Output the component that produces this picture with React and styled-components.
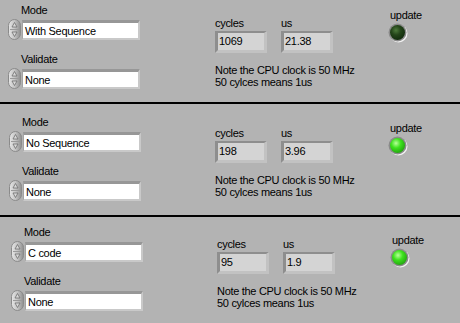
import React from "react";
import styled, { createGlobalStyle } from "styled-components";

const GlobalStyle = createGlobalStyle`
	html, body {
		margin: 0;
		padding: 0;
		background: #b3b3b3;
	}
	body {
		font-family: "Liberation Sans", Arial, sans-serif;
		font-size: 11px;
		letter-spacing: -0.3px;
		color: #000;
	}
`;

const panels = [
	{
		height: 104,
		left: { x: 8, y: 4 },
		mid: { x: 215, y: 17 },
		led: { x: 388, y: 9 },
		mode: "With Sequence",
		cycles: "1069",
		us: "21.38",
		on: false,
	},
	{
		height: 113,
		left: { x: 9, y: 12 },
		mid: { x: 215, y: 23 },
		led: { x: 388, y: 18 },
		mode: "No Sequence",
		cycles: "198",
		us: "3.96",
		on: true,
	},
	{
		height: 102,
		left: { x: 11, y: 9 },
		mid: { x: 217, y: 21 },
		led: { x: 390, y: 17 },
		mode: "C code",
		cycles: "95",
		us: "1.9",
		on: true,
	},
];

const Spinner = () => (
	<SpinBox>
		<svg width="13" height="21" viewBox="0 0 13 21">
			<defs>
				<linearGradient id="spin" x1="0" x2="1" y1="0" y2="0">
					<stop offset="0" stopColor="#e6e6e6" />
					<stop offset="0.5" stopColor="#c4c4c4" />
					<stop offset="1" stopColor="#8e8e8e" />
				</linearGradient>
			</defs>
			<rect x="0.5" y="0.5" width="12" height="20" rx="6" fill="url(#spin)" stroke="#8a8a8a" />
			<line x1="2" y1="10.5" x2="11" y2="10.5" stroke="#9a9a9a" />
			<path d="M4 8 L6.5 3.5 L9 8 Z" fill="#d8d8d8" stroke="#6e6e6e" strokeWidth="0.8" />
			<path d="M4 13 L6.5 17.5 L9 13 Z" fill="#d8d8d8" stroke="#6e6e6e" strokeWidth="0.8" />
		</svg>
	</SpinBox>
);

const Led = ({ on }) => (
	<svg width="20" height="20" viewBox="0 0 20 20">
		<defs>
			<radialGradient id={on ? "ledOn" : "ledOff"} cx="0.4" cy="0.35" r="0.7">
				<stop offset="0" stopColor={on ? "#b8ff9a" : "#4d7a3c"} />
				<stop offset="0.45" stopColor={on ? "#3ee21e" : "#24451a"} />
				<stop offset="1" stopColor={on ? "#22a010" : "#102a0c"} />
			</radialGradient>
		</defs>
		<circle cx="10.5" cy="10.5" r="9" fill="#f2f2f2" />
		<circle cx="9.5" cy="9.5" r="9" fill="#8a8a8a" />
		<circle cx="9.5" cy="9.5" r="7.5" fill={`url(#${on ? "ledOn" : "ledOff"})`} />
	</svg>
);

const Control = ({ label, value }) => (
	<Field>
		<FieldLabel>{label}</FieldLabel>
		<FieldRow>
			<Spinner />
			<TextBox>{value}</TextBox>
		</FieldRow>
	</Field>
);

const Indicator = ({ label, value }) => (
	<Numeric>
		<FieldLabel $indent={0}>{label}</FieldLabel>
		<NumBox>{value}</NumBox>
	</Numeric>
);

const App = () => (
	<>
		<GlobalStyle />
		<Page>
			{panels.map((p, i) => (
				<Panel key={i} $h={p.height} $last={i === panels.length - 1}>
					<LeftCol $x={p.left.x} $y={p.left.y}>
						<Control label="Mode" value={p.mode} />
						<Control label="Validate" value="None" />
					</LeftCol>
					<MidCol $x={p.mid.x - p.left.x - 133} $y={p.mid.y}>
						<NumRow>
							<Indicator label="cycles" value={p.cycles} />
							<Indicator label="us" value={p.us} />
						</NumRow>
						<Note>
							Note the CPU clock is 50 MHz
							<br />
							50 cylces means 1us
						</Note>
					</MidCol>
					<LedCol $x={p.led.x - p.mid.x - 160} $y={p.led.y}>
						<LedLabel>update</LedLabel>
						<Led on={p.on} />
					</LedCol>
				</Panel>
			))}
		</Page>
	</>
);

export default App;

const Page = styled.main`
	width: 460px;
	height: 323px;
	overflow: hidden;
	background: #b3b3b3;
`;

const Panel = styled.section`
	display: flex;
	align-items: flex-start;
	height: ${p => p.$h}px;
	box-sizing: border-box;
	border-bottom: ${p => (p.$last ? "none" : "2px solid #000")};
`;

const LeftCol = styled.div`
	display: flex;
	flex-direction: column;
	gap: 13px;
	width: 133px;
	margin-left: ${p => p.$x}px;
	margin-top: ${p => p.$y}px;
`;

const Field = styled.div`
	display: flex;
	flex-direction: column;
	gap: 2px;
`;

const FieldLabel = styled.div`
	line-height: 13px;
	padding-left: ${p => (p.$indent ?? 13)}px;
`;

const FieldRow = styled.div`
	display: flex;
	align-items: center;
	gap: 1px;
`;

const SpinBox = styled.div`
	display: flex;
	width: 13px;
	height: 21px;
`;

const TextBox = styled.div`
	box-sizing: border-box;
	width: 118px;
	height: 20px;
	padding: 1px 3px 0 2px;
	line-height: 15px;
	background: #fff;
	border-style: solid;
	border-width: 3px 2px 2px 1px;
	border-color: #979797 #c9c9c9 #c9c9c9 #a3a3a3;
	white-space: nowrap;
`;

const MidCol = styled.div`
	display: flex;
	flex-direction: column;
	gap: 11px;
	width: 160px;
	margin-left: ${p => p.$x}px;
	margin-top: ${p => p.$y}px;
`;

const NumRow = styled.div`
	display: flex;
	gap: 14px;
`;

const Numeric = styled.div`
	display: flex;
	flex-direction: column;
	gap: 1px;
`;

const NumBox = styled.div`
	box-sizing: border-box;
	width: 52px;
	height: 22px;
	padding-left: 1px;
	line-height: 16px;
	background: #d4d4d4;
	border-style: solid;
	border-width: 2px 3px 3px 3px;
	border-color: #8e8e8e #c2c2c2 #c2c2c2 #8e8e8e;
`;

const Note = styled.p`
	margin: 0;
	line-height: 12px;
`;

const LedCol = styled.div`
	display: flex;
	flex-direction: column;
	align-items: flex-start;
	gap: 1px;
	margin-left: ${p => p.$x}px;
	margin-top: ${p => p.$y}px;
`;

const LedLabel = styled.div`
	line-height: 13px;
	padding-left: 2px;
`;
